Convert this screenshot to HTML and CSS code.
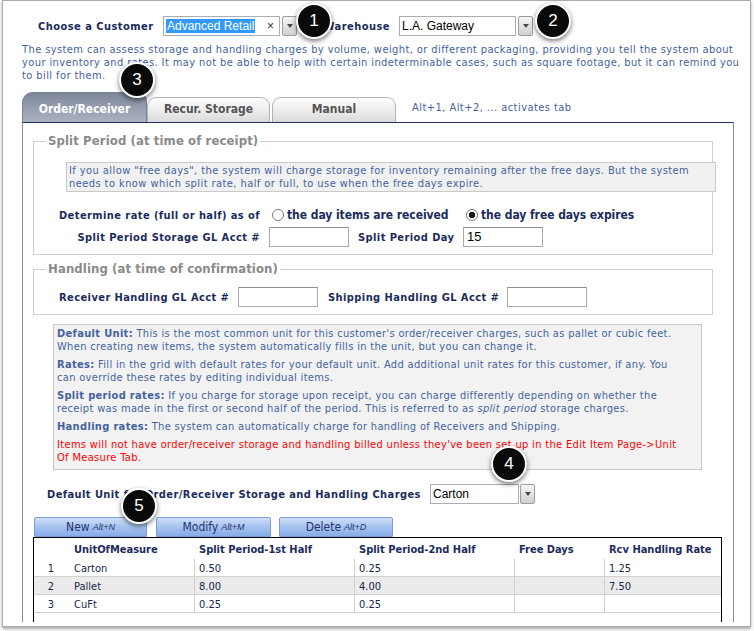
FILE: index.html
```html
<!DOCTYPE html>
<html>
<head>
<meta charset="utf-8">
<title>Customer Storage Charges</title>
<link rel="stylesheet" href="styles.css">
</head>
<body>
<div class="window">
  <div class="header">
    <span class="hlabel cust">Choose a Customer</span>
    <div class="combo">
      <div class="box w117"><span class="sel">Advanced Retail</span><span class="clear">×</span></div>
      <div class="ddbtn"></div>
    </div>
    <span class="hlabel wh">Warehouse</span>
    <div class="combo">
      <div class="box w117">L.A. Gateway</div>
      <div class="ddbtn"></div>
    </div>
  </div>

  <p class="intro">The system can assess storage and handling charges by volume, weight, or different packaging, providing you tell the system about<br>your inventory and rates. It may not be able to help with certain indeterminable cases, such as square footage, but it can remind you<br>to bill for them.</p>

  <div class="tabs">
    <div class="tab active">Order/Receiver</div>
    <div class="tab t2">Recur. Storage</div>
    <div class="tab t3">Manual</div>
    <span class="tabhint">Alt+1, Alt+2, ... activates tab</span>
  </div>

  <div class="panel">
    <fieldset class="fs fs1">
      <legend>Split Period (at time of receipt)</legend>
      <div class="note">If you allow "free days", the system will charge storage for inventory remaining after the free days. But the system<br>needs to know which split rate, half or full, to use when the free days expire.</div>
      <div class="frow r1">
        <span class="rlbl">Determine rate (full or half) as of</span>
        <span class="radio"></span><span class="opt o1">the day items are received</span>
        <span class="radio on"></span><span class="opt">the day free days expires</span>
      </div>
      <div class="frow r2">
        <span class="rlbl">Split Period Storage GL Acct #</span>
        <span class="input"></span>
        <span class="flbl spd">Split Period Day</span>
        <span class="input">15</span>
      </div>
    </fieldset>

    <fieldset class="fs fs2">
      <legend>Handling (at time of confirmation)</legend>
      <div class="frow r3">
        <span class="flbl hl1">Receiver Handling GL Acct #</span>
        <span class="input"></span>
        <span class="flbl hl2">Shipping Handling GL Acct #</span>
        <span class="input"></span>
      </div>
    </fieldset>

    <div class="help">
      <p><b>Default Unit:</b> This is the most common unit for this customer's order/receiver charges, such as pallet or cubic feet.<br>When creating new items, the system automatically fills in the unit, but you can change it.</p>
      <p><b>Rates:</b> Fill in the grid with default rates for your default unit. Add additional unit rates for this customer, if any. You<br>can override these rates by editing individual items.</p>
      <p><b>Split period rates:</b> If you charge for storage upon receipt, you can charge differently depending on whether the<br>receipt was made in the first or second half of the period. This is referred to as <i>split period</i> storage charges.</p>
      <p><b>Handling rates:</b> The system can automatically charge for handling of Receivers and Shipping.</p>
      <p class="warn">Items will not have order/receiver storage and handling billed unless they've been set up in the Edit Item Page-&gt;Unit<br>Of Measure Tab.</p>
    </div>

    <div class="unitrow">
      <span class="flbl ulbl">Default Unit for Order/Receiver Storage and Handling Charges</span>
      <div class="combo c1">
        <div class="box w89">Carton</div>
        <div class="ddbtn"></div>
      </div>
    </div>

    <div class="btns">
      <div class="btn b-new">New <i>Alt+N</i></div>
      <div class="btn b-mod">Modify <i>Alt+M</i></div>
      <div class="btn b-del">Delete <i>Alt+D</i></div>
    </div>

    <div class="grid">
      <table>
        <colgroup>
          <col class="c-num"><col class="c-uom"><col class="c-h1"><col class="c-h2"><col class="c-fd"><col class="c-rcv">
        </colgroup>
        <thead>
          <tr><th></th><th class="uom">UnitOfMeasure</th><th>Split Period-1st Half</th><th>Split Period-2nd Half</th><th>Free Days</th><th>Rcv Handling Rate</th></tr>
        </thead>
        <tbody>
          <tr><td class="num">1</td><td class="uom">Carton</td><td class="sep">0.50</td><td class="sep">0.25</td><td class="sep"></td><td class="sep">1.25</td></tr>
          <tr class="alt"><td class="num">2</td><td class="uom">Pallet</td><td class="sep">8.00</td><td class="sep">4.00</td><td class="sep"></td><td class="sep">7.50</td></tr>
          <tr><td class="num">3</td><td class="uom">CuFt</td><td class="sep">0.25</td><td class="sep">0.25</td><td class="sep"></td><td class="sep"></td></tr>
        </tbody>
      </table>
    </div>
  </div>
</div>

<div class="badge bd1">1</div>
<div class="badge bd2">2</div>
<div class="badge bd3">3</div>
<div class="badge bd4">4</div>
<div class="badge bd5">5</div>
</body>
</html>
```

FILE: styles.css
```css
* { box-sizing: border-box; }

body {
  margin: 0;
  width: 754px;
  height: 631px;
  overflow: hidden;
  position: relative;
  background: #fff;
  font-family: "DejaVu Sans Condensed", "DejaVu Sans", sans-serif;
  font-stretch: condensed;
  font-size: 11px;
  letter-spacing: 0.42px;
  color: #1b2c5c;
}

.window {
  margin-left: 2px;
  width: 749px;
  height: 627px;
  border: 1px solid #ababab;
  box-shadow: 0 2px 3px rgba(0, 0, 0, 0.35);
  background: #fff;
  overflow: hidden;
}

/* header */
.header {
  display: flex;
  align-items: center;
  height: 20px;
  margin-top: 15px;
  padding-left: 35px;
}
.hlabel { font-weight: bold; white-space: nowrap; letter-spacing: 0.46px; }
.hlabel.cust { width: 125px; }
.hlabel.wh { width: 102px; text-align: right; padding-right: 9px; }

.combo { display: flex; align-items: center; gap: 2px; }
.box {
  height: 20px;
  border: 1px solid #a9aeb6;
  background: #fff;
  font-family: "Liberation Sans", Arial, sans-serif;
  font-size: 12px;
  letter-spacing: 0;
  color: #000;
  display: flex;
  align-items: center;
  padding-left: 2px;
  white-space: nowrap;
}
.w117 { width: 117px; }
.w89 { width: 89px; }
.sel { background: #3399ff; color: #fff; line-height: 14px; padding: 0 1px; }
.clear { margin-left: auto; margin-right: 5px; font-size: 12px; color: #333; }
.ddbtn {
  width: 15px;
  height: 20px;
  border: 1px solid #9d9d9d;
  border-radius: 2px;
  background: linear-gradient(#f6f6f6, #d0d0d0);
  display: flex;
  align-items: center;
  justify-content: center;
}
.ddbtn::after {
  content: "";
  border-left: 3px solid transparent;
  border-right: 3px solid transparent;
  border-top: 4px solid #4a4a4a;
}

.intro {
  margin: 7px 0 0;
  padding-left: 19px;
  line-height: 13px;
  letter-spacing: 0.41px;
  color: #4462a0;
  white-space: nowrap;
}

/* tabs */
.tabs {
  display: flex;
  align-items: flex-end;
  height: 30px;
  margin-top: 10px;
  padding-left: 19px;
}
.tab {
  height: 25px;
  padding-bottom: 3px;
  border: 1px solid #b4b4b4;
  border-bottom: none;
  border-radius: 9px 9px 0 0;
  background: linear-gradient(#fdfdfd, #ececec 55%, #dadada);
  font-weight: bold;
  font-size: 12px;
  letter-spacing: 0;
  color: #555;
  display: flex;
  align-items: center;
  justify-content: center;
  white-space: nowrap;
}
.tab.active {
  width: 125px;
  height: 30px;
  padding: 2px 0 0;
  border-color: #7a8396;
  border-radius: 11px 9px 0 0;
  background: linear-gradient(#7d869a, #98a0b0 55%, #aab1bf);
  color: #fff;
}
.tab.t2 { width: 123px; }
.tab.t3 { width: 124px; margin-left: 2px; }
.tabhint {
  margin-left: 16px;
  line-height: 13px;
  padding-bottom: 8px;
  letter-spacing: 0.45px;
  color: #4462a0;
  white-space: nowrap;
}

/* panel */
.panel {
  margin-left: 19px;
  width: 712px;
  height: 500px;
  border: 1px solid #8e8e8e;
  border-top-color: #22306a;
  border-bottom: none;
  overflow: hidden;
}

fieldset.fs {
  margin: 0 0 0 10px;
  padding: 0;
  width: 680px;
  min-width: 0;
  border: 1px solid #cfcfcf;
}
fieldset.fs legend {
  margin-left: 12px;
  padding: 0 2px;
  font-weight: bold;
  font-size: 13px;
  line-height: 16px;
  letter-spacing: 0.1px;
  color: #8a8a8a;
}
.fs1 { margin-top: 10px !important; padding-bottom: 7px !important; }
.fs2 { margin-top: 6px !important; padding-bottom: 7px !important; }

.note {
  margin: 13px 0 0 32px;
  width: 650px;
  border: 1px solid #c9c9c9;
  background: #f1f1f1;
  padding: 1px 2px;
  line-height: 13px;
  letter-spacing: 0.43px;
  color: #4462a0;
  white-space: nowrap;
}

.frow { display: flex; align-items: center; height: 20px; white-space: nowrap; }
.frow.r1 { margin-top: 13px; }
.frow.r2 { margin-top: 2px; }
.frow.r3 { margin-top: 10px; }

.rlbl { width: 226px; margin-right: 9px; text-align: right; font-weight: bold; }
.flbl { font-weight: bold; white-space: nowrap; }
.spd { width: 96px; margin: 0 9px; }
.hl1 { width: 179px; margin-left: 25px; }
.hl2 { width: 179px; margin-left: 10px; }

.radio {
  width: 12px;
  height: 12px;
  margin: 0 3px;
  border: 1px solid #7b7b7b;
  border-radius: 50%;
  background: #fff;
  flex: none;
}
.radio.on { background: radial-gradient(circle, #1a1a1a 0 3px, #fff 3.5px); }
.opt { font-weight: bold; font-size: 12px; letter-spacing: -0.05px; }
.opt.o1 { width: 176px; }

.input {
  width: 80px;
  height: 20px;
  border: 1px solid #ababab;
  border-top-color: #8f8f8f;
  background: #fff;
  padding-left: 3px;
  font-family: "Liberation Sans", Arial, sans-serif;
  font-size: 13px;
  letter-spacing: 0;
  line-height: 18px;
  color: #000;
  flex: none;
}

/* help box */
.help {
  margin: 9px 0 0 30px;
  width: 649px;
  border: 1px solid #c9c9c9;
  background: #f2f2f2;
  padding: 2px 3px 5px;
  line-height: 13px;
  letter-spacing: 0.33px;
  color: #4462a0;
  white-space: nowrap;
}
.help p { margin: 0 0 5px; }
.help p:last-child { margin-bottom: 0; }
.help .warn { color: #f00; }

.unitrow { display: flex; align-items: center; height: 20px; margin-top: 14px; }
.ulbl { width: 383px; margin-left: 24px; }
.combo.c1 { gap: 1px; }

/* buttons */
.btns { display: flex; margin: 13px 0 0 11px; height: 20px; }
.btn {
  height: 20px;
  border: 1px solid #7b9dd6;
  border-radius: 2px 2px 0 0;
  background: linear-gradient(#cfe0f8, #a9c5f0 45%, #87ace9);
  color: #1f336a;
  font-size: 12px;
  letter-spacing: 0;
  display: flex;
  align-items: center;
  justify-content: center;
  white-space: nowrap;
}
.btn i { font-family: "Liberation Sans", Arial, sans-serif; font-size: 9px; margin-left: 3px; }
.b-new { width: 113px; }
.b-mod { width: 115px; margin-left: 9px; }
.b-del { width: 114px; margin-left: 8px; }

/* grid */
.grid {
  margin-left: 10px;
  width: 689px;
  height: 85px;
  border: 1px solid #000;
  border-bottom: none;
  letter-spacing: 0;
}
.grid table { width: 687px; table-layout: fixed; border-spacing: 0; }
.c-num { width: 34px; }
.c-uom { width: 126px; }
.c-h1 { width: 160px; }
.c-h2 { width: 160px; }
.c-fd { width: 90px; }
.c-rcv { width: 117px; }
.grid th {
  height: 21px;
  padding: 2px 0 0 5px;
  text-align: left;
  font-weight: bold;
  color: #1b2c5c;
  white-space: nowrap;
}
.grid th.uom { padding-left: 6px; }
.grid td {
  height: 18px;
  padding: 1px 0 0 5px;
  border-bottom: 1px solid #d2d2d2;
  color: #16264a;
  white-space: nowrap;
}
.grid td.sep { border-left: 1px solid #cfcfcf; padding-left: 4px; }
.grid td.uom { padding-left: 6px; }
.grid td.num { padding-left: 0; text-align: center; }
.grid tr.alt td { background: #ebebeb; }

/* callout badges */
.badge {
  position: absolute;
  width: 36px;
  height: 36px;
  border-radius: 50%;
  border: 2px solid #fff;
  background: #0a0a0a;
  box-shadow: 0 2px 5px rgba(0, 0, 0, 0.55);
  color: #fff;
  font-family: "Liberation Sans", Arial, sans-serif;
  font-size: 17px;
  letter-spacing: 0;
  line-height: 32px;
  text-align: center;
}
.bd1 { left: 296px; top: 3px; }
.bd2 { left: 535px; top: 3px; }
.bd3 { left: 119px; top: 62px; }
.bd4 { left: 491px; top: 446px; }
.bd5 { left: 121px; top: 488px; }
```
